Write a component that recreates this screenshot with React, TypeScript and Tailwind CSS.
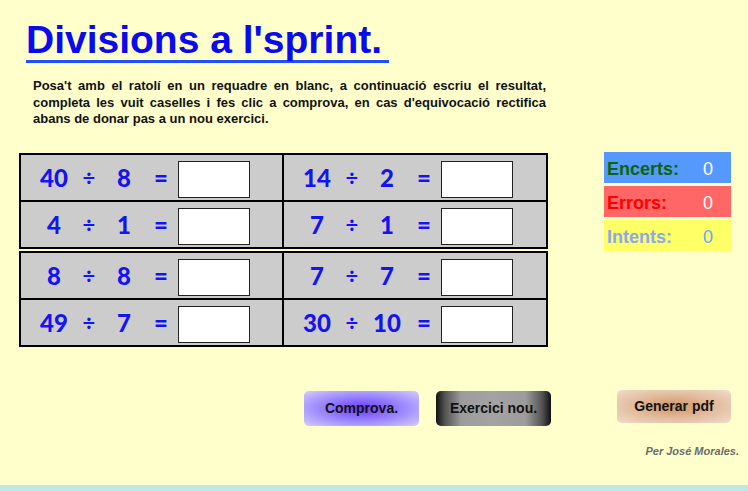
const rows: [number, number][][] = [
  [[40, 8], [14, 2]],
  [[4, 1], [7, 1]],
  [[8, 8], [7, 7]],
  [[49, 7], [30, 10]],
];

function Cell({ a, b, first }: { a: number; b: number; first: boolean }) {
  return (
    <div className={`flex items-center pl-[13px] ${first ? 'w-[263px] border-r-2 border-black' : 'flex-1'}`}>
      <span className="w-[40px] text-center">{a}</span>
      <span className="w-[30px] text-center text-[22px] font-bold">÷</span>
      <span className="w-[40px] text-center">{b}</span>
      <span className="w-[34px] text-center">=</span>
      <div className="mt-[4px] h-[37px] w-[72px] border border-[#222] bg-white" />
    </div>
  );
}

function Table({ data }: { data: [number, number][][] }) {
  return (
    <div
      className="w-[529px] border-2 border-black bg-[#cccccc] text-[24px] font-black leading-none text-[#1414f2]"
      style={{ fontFamily: '"Comic Sans MS", Lato, sans-serif' }}
    >
      {data.map((row, i) => (
        <div key={i} className={`flex ${i === 0 ? 'h-[47px] border-b-2 border-black' : 'h-[45px]'}`}>
          <Cell a={row[0][0]} b={row[0][1]} first />
          <Cell a={row[1][0]} b={row[1][1]} first={false} />
        </div>
      ))}
    </div>
  );
}

function Score({ label, value, bg, labelColor, valueColor }: { label: string; value: string; bg: string; labelColor: string; valueColor: string }) {
  return (
    <div className={`flex h-[31px] items-end pb-[3px] pl-[3px] ${bg}`}>
      <span className={`w-[84px] text-[18px] font-bold leading-[22px] ${labelColor}`}>{label}</span>
      <span className={`w-[34px] text-center text-[18px] leading-[22px] ${valueColor}`}>{value}</span>
    </div>
  );
}

export default function App() {
  return (
    <div
      className="flex h-[491px] w-[748px] flex-col overflow-hidden bg-[#ffffcc]"
      style={{ fontFamily: '"Liberation Sans", Arial, sans-serif' }}
    >
      {/* Title */}
      <div className="pl-[26px] pt-[20px]">
        <h1 className="inline-block border-b-[3px] border-[#1f4fff] pb-[1px] pr-[7px] text-[39px] font-bold leading-none text-[#0a0af0]">
          Divisions a l'sprint.
        </h1>
      </div>

      {/* Instructions */}
      <div className="ml-[33px] mt-[15px] h-[50px] w-[513px] text-[13px] font-bold leading-[16.5px] text-[#111]">
        <div className="text-justify [text-align-last:justify]">
          Posa't amb el ratolí en un requadre en blanc, a continuació escriu el resultat,
        </div>
        <div className="text-justify [text-align-last:justify]">
          completa les vuit caselles i fes clic a comprova, en cas d'equivocació rectifica
        </div>
        <div>abans de donar pas a un nou exercici.</div>
      </div>

      {/* Exercises + scores */}
      <div className="mt-[25px] flex items-start">
        <div className="ml-[19px] flex flex-col gap-[2px]">
          <Table data={rows.slice(0, 2)} />
          <Table data={rows.slice(2, 4)} />
        </div>
        <div className="-mt-[1px] ml-[56px] flex w-[127px] flex-col gap-[3px]">
          <Score label="Encerts:" value="0" bg="bg-[#5599ff]" labelColor="text-[#0a660a]" valueColor="text-white" />
          <Score label="Errors:" value="0" bg="bg-[#ff6666]" labelColor="text-[#ff0000]" valueColor="text-white" />
          <Score label="Intents:" value="0" bg="bg-[#ffff66]" labelColor="text-[#8aa8ee]" valueColor="text-[#66aaff]" />
        </div>
      </div>

      {/* Buttons */}
      <div className="mt-[44px] flex items-start text-[14px] font-bold text-[#111]">
        <button className="ml-[304px] h-[35px] w-[115px] rounded-[5px] bg-[radial-gradient(ellipse_at_center,#6a3cff_0%,#9f8cff_55%,#d6ccff_100%)]">
          Comprova.
        </button>
        <button className="ml-[17px] h-[35px] w-[115px] rounded-[5px] bg-[linear-gradient(to_right,#111_0%,#555_8%,#9c9c9c_22%,#a3a3a3_50%,#9c9c9c_78%,#555_92%,#111_100%)]">
          Exercici nou.
        </button>
        <button className="-mt-[1px] ml-[66px] h-[33px] w-[114px] rounded-[5px] bg-[radial-gradient(ellipse_at_center,#d19464_0%,#e2bb9c_50%,#f0dccb_100%)]">
          Generar pdf
        </button>
      </div>

      {/* Author */}
      <div className="mt-[19px] pr-[9px] text-right text-[11px] font-bold italic leading-[13px] text-[#6b6b6b]">
        Per José Morales.
      </div>

      <div className="mt-auto h-[6px] bg-[#bee8e8]" />
    </div>
  );
}
